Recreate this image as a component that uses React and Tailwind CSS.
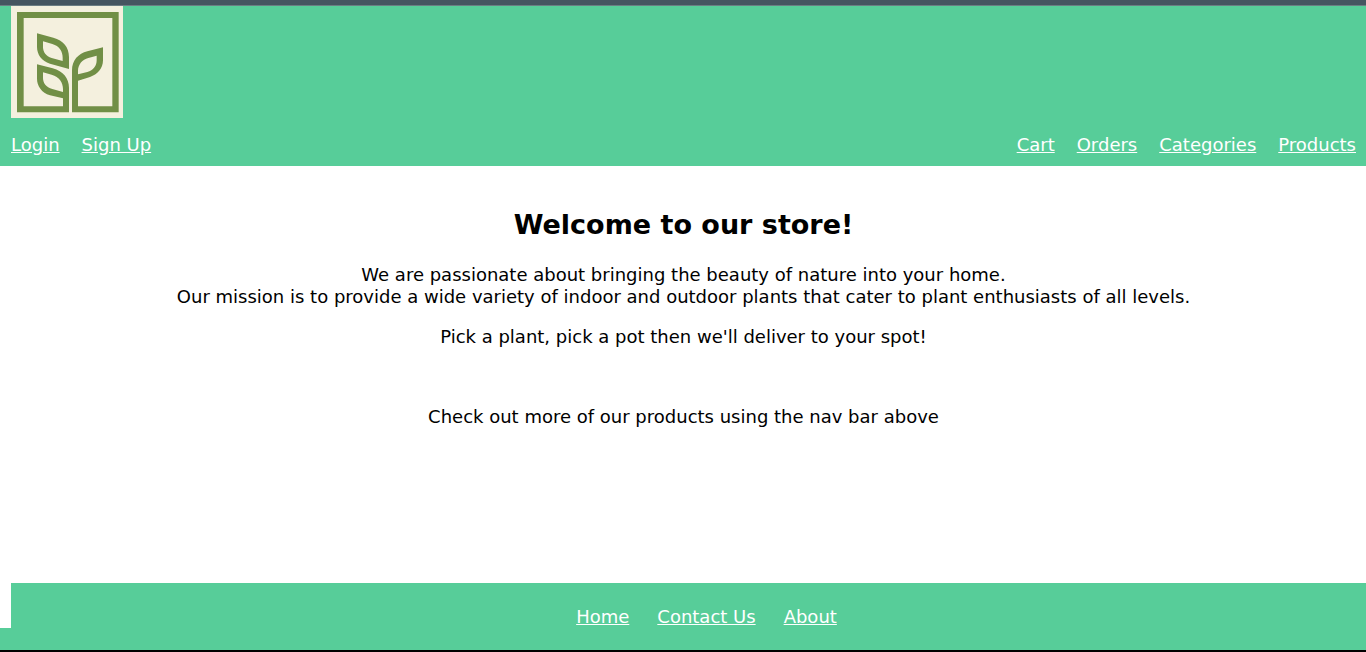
const accountLinks = ["Login", "Sign Up"];
const shopLinks = ["Cart", "Orders", "Categories", "Products"];
const footerLinks = ["Home", "Contact Us", "About"];

function Logo() {
  return (
    <svg viewBox="33 17 336 336" className="block size-28" role="img" aria-label="Plant store">
      <rect x="33" y="17" width="336" height="336" fill="#f4f0de" />
      <g fill="#718f46" fillRule="evenodd">
        <path d="M51 35H356V336H216V210C216 180 235 160 262 153L309 141V180C309 205 292 223 270 230L234 241V318H337V53H71V318H189V294L150 285C125 277 111 257 111 235V192L158 204C190 212 207 235 207 262V336H51ZM129 216V233C129 248 138 261 157 266L189 275V266C189 247 178 229 155 223ZM290 166L265 173C247 178 234 192 234 212V222L262 215C280 210 290 197 290 180Z" />
        <path d="M111 99L160 112C190 120 207 140 207 170V206L150 190C125 183 111 162 111 140ZM129 123V140C129 155 138 168 155 173L188 182V172C188 153 178 137 157 131Z" />
      </g>
    </svg>
  );
}

function Links({ items, className }) {
  return (
    <ul className={className}>
      {items.map((item) => (
        <li key={item}>
          <a href="#" className="text-white underline">{item}</a>
        </li>
      ))}
    </ul>
  );
}

export default function App() {
  return (
    <div
      className="flex min-h-screen flex-col border-b-2 border-black bg-white text-[18px] leading-[22px] text-black"
      style={{ fontFamily: 'Verdana, "DejaVu Sans", sans-serif' }}
    >
      <header className="border-t-[5px] border-[#455560] bg-[#57cd99]">
        <div className="border-t border-[#6b7d83] pr-[10px] pl-[11px]">
          <Logo />
          <nav className="flex flex-wrap justify-between pt-4 pb-[10px]">
            <Links items={accountLinks} className="flex gap-[22px]" />
            <Links items={shopLinks} className="flex flex-wrap gap-[22px]" />
          </nav>
        </div>
      </header>

      <main className="grow pt-[41px] pr-[10px] pl-[11px] text-center">
        <h1 className="text-[27px] leading-9 font-bold">Welcome to our store!</h1>
        <p className="mt-[21px]">
          We are passionate about bringing the beauty of nature into your home.
          <br />
          Our mission is to provide a wide variety of indoor and outdoor plants that cater to plant enthusiasts of all levels.
        </p>
        <p className="mt-[18px]">Pick a plant, pick a pot then we'll deliver to your spot!</p>
        <p className="mt-[58px]">Check out more of our products using the nav bar above</p>
      </main>

      <footer>
        <nav className="ml-[11px] bg-[#57cd99] pt-[23px] pl-9">
          <Links items={footerLinks} className="flex flex-wrap justify-center gap-7" />
        </nav>
        <div className="h-[22px] bg-[#57cd99]" />
      </footer>
    </div>
  );
}
